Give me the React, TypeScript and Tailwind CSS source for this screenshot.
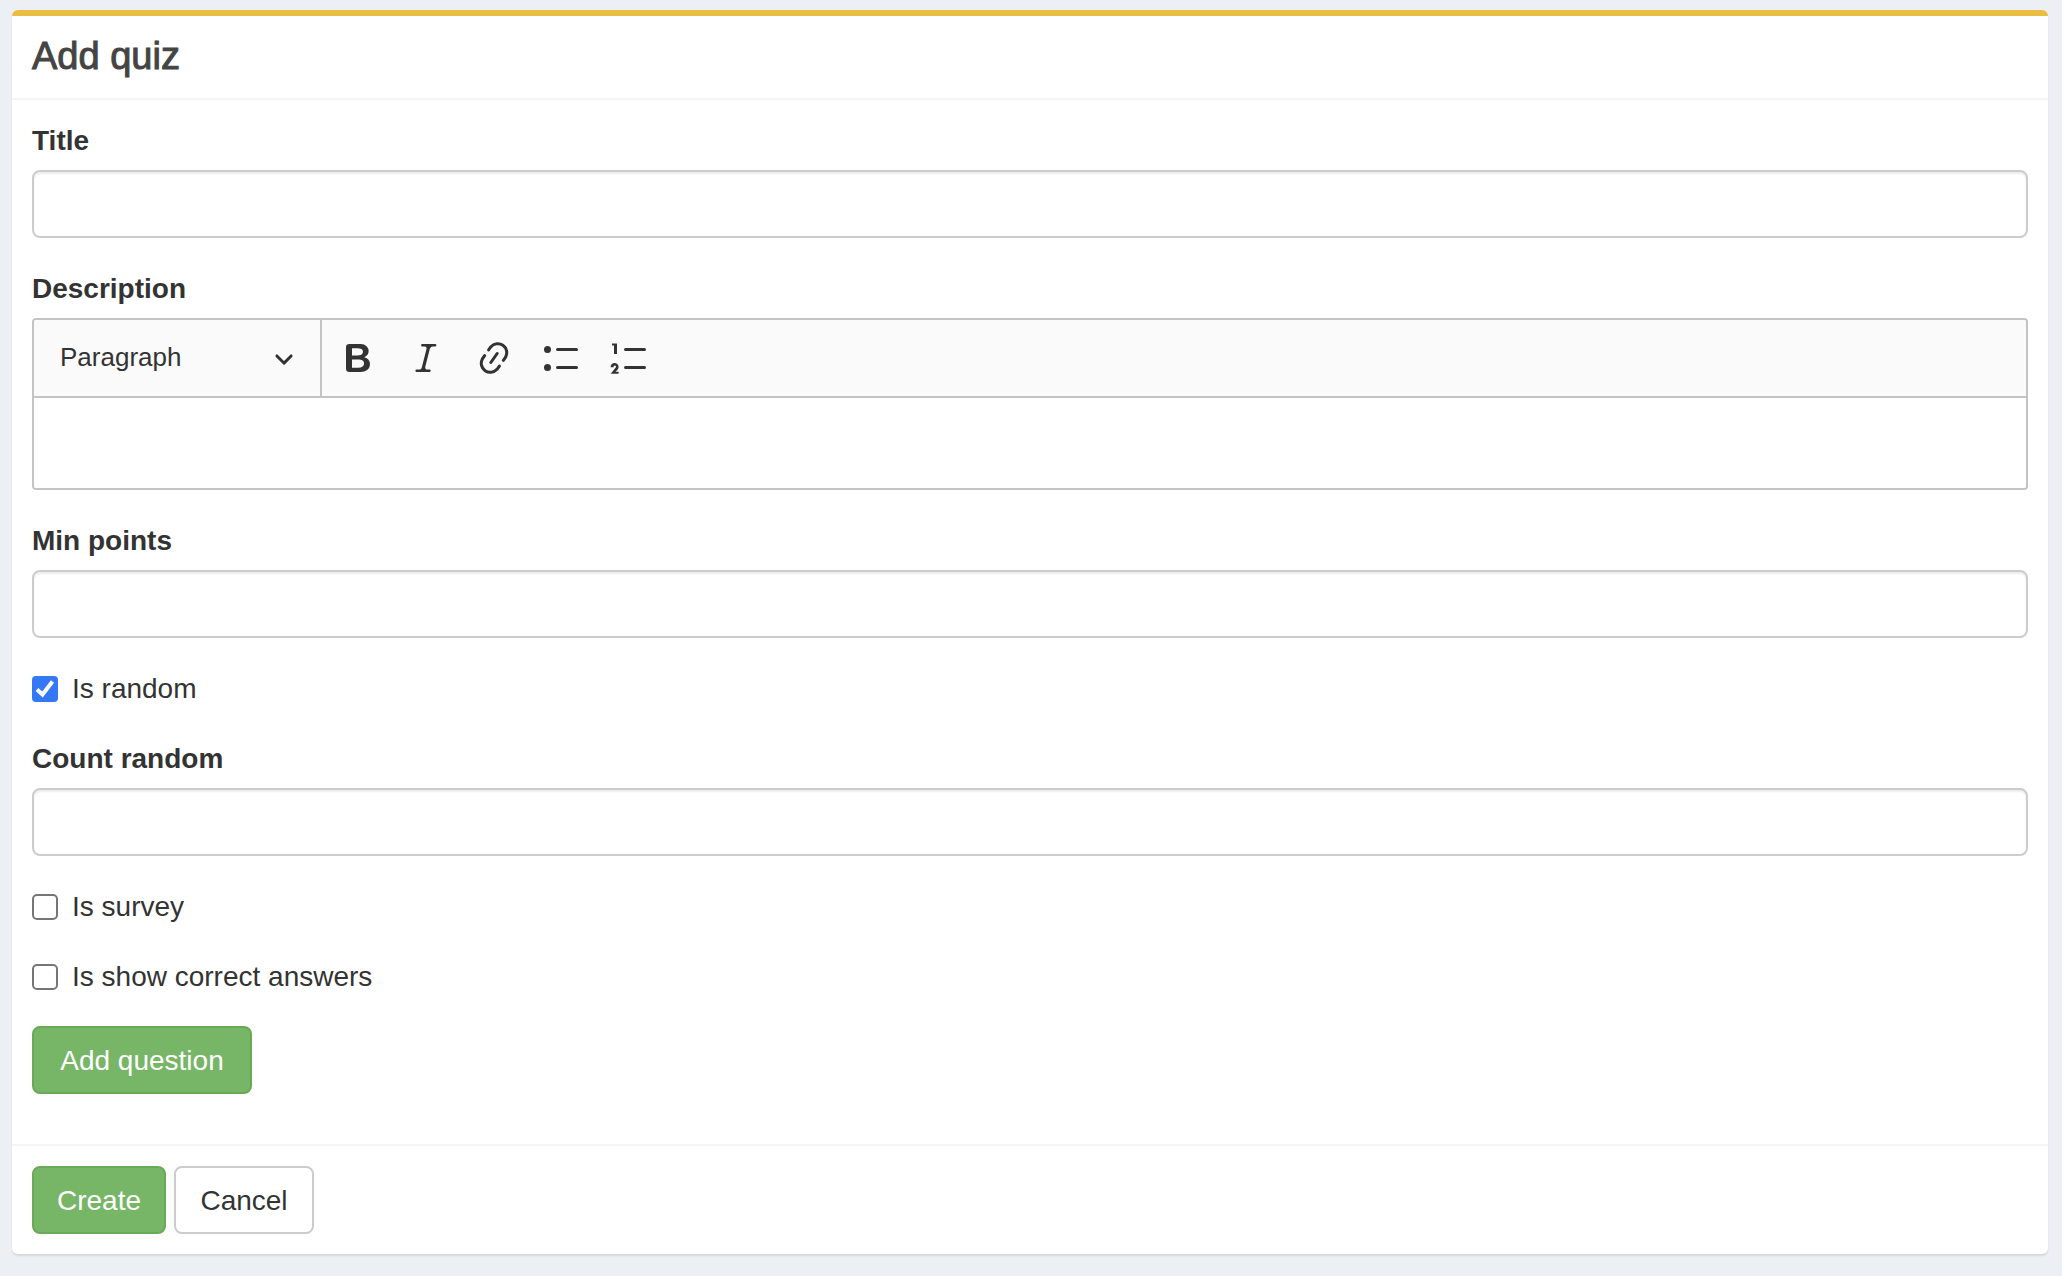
import React, { useState } from "react";

const ICONS = {
  bold: "M10.187 17H5.773c-.637 0-1.092-.138-1.364-.415-.273-.277-.409-.718-.409-1.323V4.738c0-.617.14-1.062.419-1.332.279-.27.73-.406 1.354-.406h4.68c.69 0 1.288.041 1.793.124.506.083.96.242 1.36.478.341.197.644.447.906.75a3.262 3.262 0 0 1 .808 2.162c0 1.401-.722 2.426-2.167 3.075C15.05 10.175 16 11.315 16 13.01a3.756 3.756 0 0 1-2.296 3.504 6.1 6.1 0 0 1-1.517.377c-.571.073-1.238.11-2 .11zm-.217-6.217H7v4.087h3.069c1.977 0 2.965-.69 2.965-2.072 0-.707-.256-1.22-.768-1.537-.512-.319-1.277-.478-2.296-.478zM7 5.13v3.619h2.606c.729 0 1.292-.067 1.69-.2a1.6 1.6 0 0 0 .91-.765c.165-.267.247-.566.247-.897 0-.707-.26-1.176-.778-1.409-.519-.232-1.31-.348-2.375-.348H7z",
  italic:
    "m9.586 14.633.021.004c-.036.335.095.655.393.962.082.083.173.15.274.201h1.474a.6.6 0 1 1 0 1.2H5.304a.6.6 0 0 1 0-1.2h1.15c.474-.07.809-.182 1.005-.334.157-.122.291-.32.404-.597l2.416-9.55a1.053 1.053 0 0 0-.281-.823 1.12 1.12 0 0 0-.442-.296H8.15a.6.6 0 0 1 0-1.2h6.443a.6.6 0 1 1 0 1.2h-1.195c-.376.056-.65.155-.823.296-.215.175-.423.439-.623.79l-2.366 9.347z",
  link: "m11.077 15 .991-1.416a.75.75 0 1 1 1.229.86l-1.148 1.64a.748.748 0 0 1-.217.206 5.251 5.251 0 0 1-8.503-5.955.741.741 0 0 1 .12-.274l1.147-1.639a.75.75 0 1 1 1.228.86L4.933 10.7l.006.003a3.75 3.75 0 0 0 6.132 4.294l.006.004zm5.494-5.335a.748.748 0 0 1-.12.274l-1.147 1.639a.75.75 0 1 1-1.228-.86l.86-1.23a3.75 3.75 0 0 0-6.144-4.301l-.86 1.229a.75.75 0 0 1-1.229-.86l1.148-1.64a.748.748 0 0 1 .217-.206 5.251 5.251 0 0 1 8.503 5.955zm-4.563-2.532a.75.75 0 0 1 .184 1.045l-3.155 4.505a.75.75 0 1 1-1.229-.86l3.155-4.506a.75.75 0 0 1 1.045-.184z",
  bulleted:
    "M7 5.75c0 .414.336.75.75.75h9.5a.75.75 0 1 0 0-1.5h-9.5a.75.75 0 0 0-.75.75zM1 5.75a1.75 1.75 0 1 1 3.5 0 1.75 1.75 0 0 1-3.5 0zM7 14.75c0 .414.336.75.75.75h9.5a.75.75 0 1 0 0-1.5h-9.5a.75.75 0 0 0-.75.75zM1 14.75a1.75 1.75 0 1 1 3.5 0 1.75 1.75 0 0 1-3.5 0z",
  numbered:
    "M7 5.75c0 .414.336.75.75.75h9.5a.75.75 0 1 0 0-1.5h-9.5a.75.75 0 0 0-.75.75zM3.5 3v5H2V3.7H1v-1h2.5V3zM.343 17.857l2.59-3.257H2.92a.6.6 0 1 0-1.04 0H.302a2 2 0 1 1 3.995 0h-.001c-.048.405-.16.734-.333.988-.175.254-.59.692-1.244 1.312H4.3v1h-4l.043-.043zM7 14.75c0 .414.336.75.75.75h9.5a.75.75 0 1 0 0-1.5h-9.5a.75.75 0 0 0-.75.75z",
};

function Field({ id, label }: { id: string; label: string }) {
  return (
    <div className="flex flex-col gap-[10px]">
      <label htmlFor={id} className="self-start font-bold">
        {label}
      </label>
      <input
        id={id}
        type="text"
        className="h-[68px] w-full rounded-lg border-2 border-[#ccc] bg-white px-6 shadow-[inset_0_2px_2px_rgba(0,0,0,0.075)] outline-none focus:border-[#66afe9]"
      />
    </div>
  );
}

function Check({ id, label, initial = false }: { id: string; label: string; initial?: boolean }) {
  const [on, setOn] = useState(initial);
  return (
    <label htmlFor={id} className="flex items-center gap-[14px] self-start">
      <span className="relative size-[26px] shrink-0">
        <input
          id={id}
          type="checkbox"
          checked={on}
          onChange={(e) => setOn(e.target.checked)}
          className="peer block size-full appearance-none rounded-[5px] border-2 border-[#767676] bg-white checked:rounded-[4px] checked:border-[#3478f6] checked:bg-[#3478f6]"
        />
        <svg viewBox="0 0 26 26" className="pointer-events-none absolute inset-0 hidden peer-checked:block" aria-hidden="true">
          <path d="M5 13.5l5.5 5L20.5 5.5" fill="none" stroke="#fff" strokeWidth="4" />
        </svg>
      </span>
      {label}
    </label>
  );
}

function Tool({ name, path }: { name: string; path: string }) {
  return (
    <button type="button" aria-label={name} className="flex size-[60px] items-center justify-center rounded hover:bg-[#e6e6e6]">
      <svg viewBox="0 0 20 20" className="size-10" fill="currentColor" aria-hidden="true">
        <path d={path} />
      </svg>
    </button>
  );
}

export default function App() {
  return (
    <main className="min-h-screen bg-[#ecf0f5] pt-[10px] pr-[14px] pb-[22px] pl-3 font-['Liberation_Sans',Arial,sans-serif] text-[28px] leading-[38px] text-[#333]">
      <form
        onSubmit={(e) => e.preventDefault()}
        className="rounded-md border-t-[6px] border-[#ebbd42] bg-white shadow-[0_2px_2px_rgba(0,0,0,0.1)]"
      >
        <header className="border-b-2 border-[#f4f4f4] px-5 pt-5 pb-[22px]">
          <h1 className="text-[38px] leading-10 text-[#444] [-webkit-text-stroke:1px_#444]">Add quiz</h1>
        </header>

        <div className="px-5 pt-[22px] pb-[50px]">
          <div className="flex flex-col gap-8">
            <Field id="title" label="Title" />

            <div className="flex flex-col gap-[10px]">
              <label htmlFor="description" className="self-start font-bold">
                Description
              </label>
              <div className="overflow-hidden rounded border-2 border-[#c4c4c4]">
                <div className="flex h-[78px] items-center border-b-2 border-[#c4c4c4] bg-[#fafafa]">
                  <div className="relative h-full w-[288px] border-r-2 border-[#c4c4c4]">
                    <select
                      aria-label="Heading"
                      className="h-full w-full appearance-none bg-transparent pr-16 pb-[2px] pl-[26px] text-[26px] outline-none"
                    >
                      <option>Paragraph</option>
                      <option>Heading 1</option>
                      <option>Heading 2</option>
                      <option>Heading 3</option>
                    </select>
                    <svg
                      viewBox="0 0 10 10"
                      className="pointer-events-none absolute top-7 right-[26px] size-5"
                      fill="currentColor"
                      aria-hidden="true"
                    >
                      <path d="M.941 4.523a.75.75 0 1 1 1.06-1.06l3.006 3.005 3.005-3.005a.75.75 0 1 1 1.06 1.06l-3.549 3.55a.75.75 0 0 1-1.168-.136L.941 4.523z" />
                    </svg>
                  </div>
                  <div className="flex gap-2 pl-[6px]">
                    <Tool name="Bold" path={ICONS.bold} />
                    <Tool name="Italic" path={ICONS.italic} />
                    <Tool name="Link" path={ICONS.link} />
                    <Tool name="Bulleted List" path={ICONS.bulleted} />
                    <Tool name="Numbered List" path={ICONS.numbered} />
                  </div>
                </div>
                <textarea id="description" className="block h-[90px] w-full resize-none bg-white px-5 py-6 outline-none" />
              </div>
            </div>

            <Field id="min-points" label="Min points" />
            <Check id="is-random" label="Is random" initial />
            <Field id="count-random" label="Count random" />
            <Check id="is-survey" label="Is survey" />
            <Check id="is-show-correct-answers" label="Is show correct answers" />
          </div>

          <button
            type="button"
            className="mt-[30px] block h-[68px] min-w-[220px] rounded-lg border-2 border-[#69aa59] bg-[#77b567] px-5 pt-[2px] text-white"
          >
            Add question
          </button>
        </div>

        <footer className="flex gap-2 border-t-2 border-[#f4f4f4] p-5">
          <button
            type="submit"
            className="h-[68px] min-w-[134px] rounded-lg border-2 border-[#69aa59] bg-[#77b567] px-5 pt-[2px] text-white"
          >
            Create
          </button>
          <button type="button" className="h-[68px] min-w-[140px] rounded-lg border-2 border-[#ccc] bg-white px-5 pt-[2px]">
            Cancel
          </button>
        </footer>
      </form>
    </main>
  );
}
